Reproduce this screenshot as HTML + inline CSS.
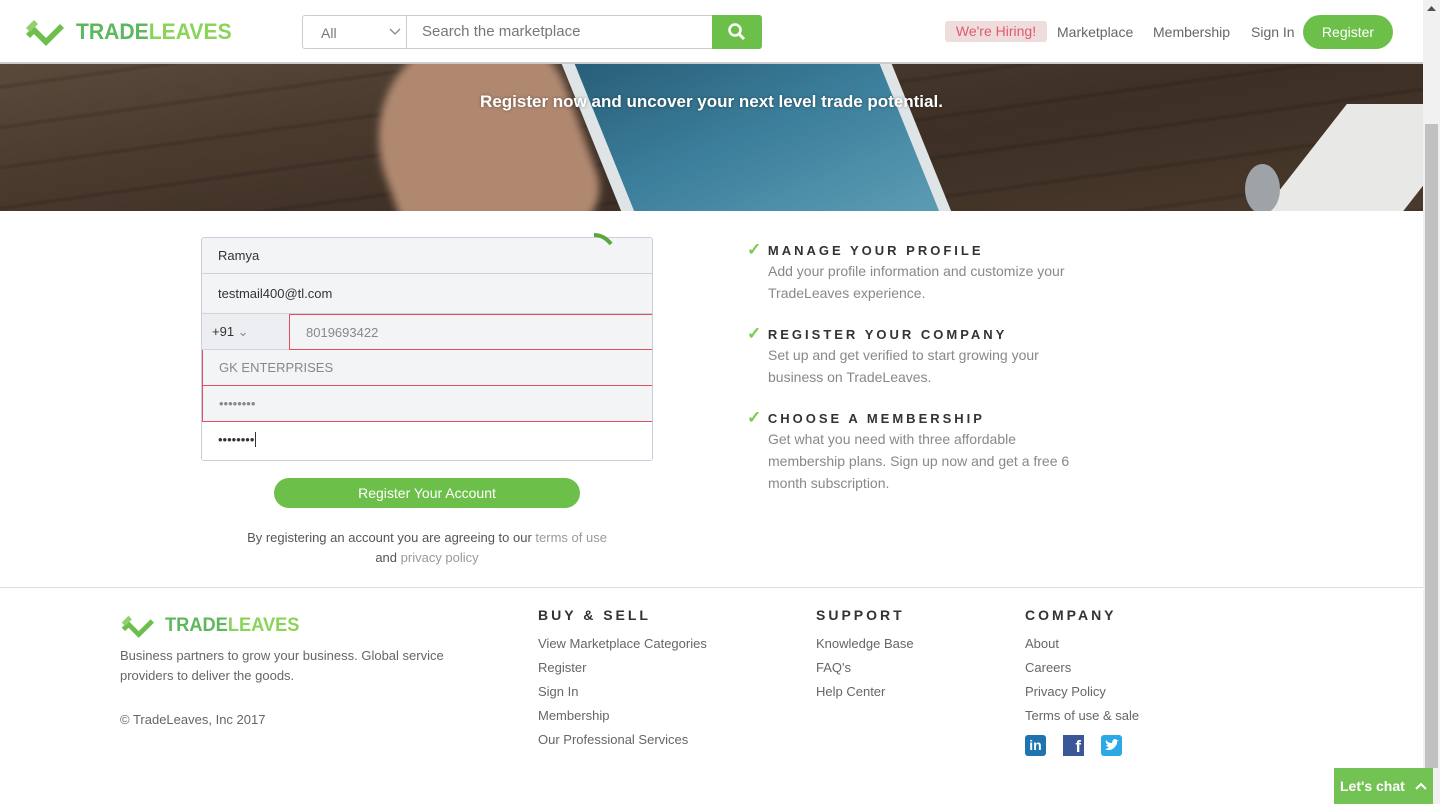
<!DOCTYPE html>
<html><head><meta charset="utf-8"><style>
*{box-sizing:border-box;margin:0;padding:0}
body{width:1440px;height:804px;overflow:hidden;font-family:"Liberation Sans",sans-serif;background:#fff;position:relative;color:#555}
.abs{position:absolute}
.hero{left:0;top:64px;width:1423px;height:147px;overflow:hidden;background:linear-gradient(170deg,#5a4a3c 0%,#4a3a2e 30%,#3d2f25 60%,#4a3a2c 100%)}
.header{left:0;top:0;width:1423px;height:64px;background:#fff;border-bottom:2px solid #ccc;z-index:5}
.logo{font-weight:bold;font-size:22px;letter-spacing:0px;transform:scaleX(0.96);transform-origin:left}
.nav{font-size:14px;color:#666}
.inp{position:absolute;left:0;width:451px;height:36px;background:#f3f4f6;border-bottom:1px solid #d0d3d8;font-size:13px;padding-left:16px;line-height:36px;color:#333}
.feat h{display:block;font-size:13px;font-weight:bold;letter-spacing:3px;color:#333}
.feat p{font-size:14px;line-height:22px;color:#888;margin-left:21px;width:328px}
.fh{font-size:14px;font-weight:bold;letter-spacing:3px;color:#333}
.fl{font-size:13px;color:#666;line-height:24px}
</style></head><body>
<div class="abs header">
  <svg class="abs" style="left:24px;top:18px" width="40" height="28" viewBox="0 0 40 28"><path d="M2 16 L10 8 L22 20 L36 6 L40 10 L22 28 L10 16 L6 20 Z" fill="#6dbf4b"/><path d="M10 2 L14 6 L6 14 L2 10Z" fill="#8fd16a"/></svg>
  <div class="abs logo" style="left:76px;top:19px"><span style="color:#5cb85c">TRADE</span><span style="color:#8bd45a">LEAVES</span></div>
  <div class="abs" style="left:302px;top:15px;width:460px;height:34px;border:1px solid #ccc;border-radius:3px;background:#fff">
    <div class="abs" style="left:18px;top:9px;font-size:14px;color:#777">All</div>
    <svg class="abs" style="left:86px;top:12px" width="12" height="8"><path d="M1 1L6 6L11 1" stroke="#888" fill="none" stroke-width="1.3"/></svg>
    <div class="abs" style="left:103px;top:0;height:32px;border-left:1px solid #ccc"></div>
    <div class="abs" style="left:119px;top:7px;font-size:15px;color:#777">Search the marketplace</div>
    <div class="abs" style="left:409px;top:-1px;width:50px;height:34px;background:#6cc04a;border-radius:0 3px 3px 0">
      <svg class="abs" style="left:15px;top:7px" width="20" height="20"><circle cx="8" cy="8" r="5.5" stroke="#fff" stroke-width="2.5" fill="none"/><path d="M12 12L17 17" stroke="#fff" stroke-width="3"/></svg>
    </div>
  </div>
  <div class="abs" style="left:945px;top:21px;width:102px;height:21px;background:#efdcdd;border-radius:3px;color:#e05a6a;font-size:14px;text-align:center;line-height:21px">We're Hiring!</div>
  <div class="abs nav" style="left:1057px;top:24px">Marketplace</div>
  <div class="abs nav" style="left:1153px;top:24px">Membership</div>
  <div class="abs nav" style="left:1251px;top:24px">Sign In</div>
  <div class="abs" style="left:1303px;top:15px;width:90px;height:34px;background:#6cc04a;border-radius:17px;color:#fff;font-size:14px;text-align:center;line-height:34px">Register</div>
</div>
<div class="abs hero">
  <div class="abs" style="left:0;top:0;width:1423px;height:147px;background:repeating-linear-gradient(172deg,rgba(0,0,0,0) 0 20px,rgba(0,0,0,.12) 22px 24px,rgba(0,0,0,0) 26px 40px)"></div>
  <div class="abs" style="left:380px;top:-30px;width:200px;height:220px;background:#b08870;border-radius:50% 40% 20% 30%;transform:rotate(-20deg);filter:blur(4px)"></div>
  <div class="abs" style="left:590px;top:-60px;width:330px;height:260px;background:#dfe4e6;transform:skewX(22deg)"></div>
  <div class="abs" style="left:603px;top:-60px;width:305px;height:260px;background:linear-gradient(160deg,#1f4e66,#3c7f9c 50%,#6aa8bc);transform:skewX(22deg)"></div>
  <div class="abs" style="left:1300px;top:40px;width:140px;height:120px;background:#e8e8e6;transform:skewX(-38deg)"></div>
  <div class="abs" style="left:1245px;top:100px;width:35px;height:50px;background:#9ea3a8;border-radius:50%"></div>
  <div class="abs" style="left:0;top:28px;width:1423px;text-align:center;color:#fff;font-weight:bold;font-size:17px;text-shadow:0 0 3px rgba(0,0,0,.4)">Register now and uncover your next level trade potential.</div>
</div>
<div class="abs" style="left:201px;top:237px;width:452px;height:224px;border:1px solid #ccd;border-radius:3px;overflow:hidden">
  <div class="inp" style="top:0">Ramya</div>
  <div class="inp" style="top:36px;height:40px;line-height:40px">testmail400@tl.com</div>
  <div class="inp" style="top:76px;width:87px;background:#eceef1;padding-left:10px">+91 <span style="color:#888">&#8964;</span></div>
  <div class="inp" style="top:76px;left:87px;width:364px;border:1px solid #e0505e;color:#888">8019693422</div>
  <div class="inp" style="top:112px;border:1px solid #e0505e;border-top:0;color:#888">GK ENTERPRISES</div>
  <div class="inp" style="top:148px;border:1px solid #e0505e;border-top:0;color:#888">••••••••</div>
  <div class="inp" style="top:184px;background:#fff;height:40px;border:0">••••••••<span style="border-left:1px solid #333;margin-left:1px"></span></div>
</div>
<svg class="abs" style="left:592px;top:232px" width="22" height="14"><path d="M2 3 Q12 3 19 12" stroke="#5aa83c" stroke-width="4" fill="none"/></svg>
<div class="abs" style="left:274px;top:478px;width:306px;height:30px;background:#6cc04a;border-radius:15px;color:#fff;font-size:14px;text-align:center;line-height:30px">Register Your Account</div>
<div class="abs" style="left:242px;top:528px;width:370px;text-align:center;font-size:13px;line-height:20px;color:#555">By registering an account you are agreeing to our <span style="color:#999">terms of use</span> and <span style="color:#999">privacy policy</span></div>
<div class="abs feat" style="left:747px;top:240px">
  <h><span style="color:#7acb4c;letter-spacing:0;font-size:17px">✓</span> MANAGE YOUR PROFILE</h>
  <p>Add your profile information and customize your TradeLeaves experience.</p>
</div>
<div class="abs feat" style="left:747px;top:324px">
  <h><span style="color:#7acb4c;letter-spacing:0;font-size:17px">✓</span> REGISTER YOUR COMPANY</h>
  <p>Set up and get verified to start growing your business on TradeLeaves.</p>
</div>
<div class="abs feat" style="left:747px;top:408px">
  <h><span style="color:#7acb4c;letter-spacing:0;font-size:17px">✓</span> CHOOSE A MEMBERSHIP</h>
  <p>Get what you need with three affordable membership plans. Sign up now and get a free 6 month subscription.</p>
</div>
<div class="abs" style="left:0;top:587px;width:1423px;border-top:1px solid #ddd"></div>
<svg class="abs" style="left:120px;top:614px" width="34" height="24" viewBox="0 0 40 28"><path d="M2 16 L10 8 L22 20 L36 6 L40 10 L22 28 L10 16 L6 20 Z" fill="#6dbf4b"/><path d="M10 2 L14 6 L6 14 L2 10Z" fill="#8fd16a"/></svg>
<div class="abs logo" style="left:165px;top:615px;font-size:19px"><span style="color:#5cb85c">TRADE</span><span style="color:#8bd45a">LEAVES</span></div>
<div class="abs fl" style="left:120px;top:646px;width:370px;line-height:20px">Business partners to grow your business. Global service providers to deliver the goods.</div>
<div class="abs fl" style="left:120px;top:710px;line-height:20px">© TradeLeaves, Inc 2017</div>
<div class="abs fh" style="left:538px;top:607px">BUY &amp; SELL</div>
<div class="abs fl" style="left:538px;top:632px">View Marketplace Categories<br>Register<br>Sign In<br>Membership<br>Our Professional Services</div>
<div class="abs fh" style="left:816px;top:607px">SUPPORT</div>
<div class="abs fl" style="left:816px;top:632px">Knowledge Base<br>FAQ's<br>Help Center</div>
<div class="abs fh" style="left:1025px;top:607px">COMPANY</div>
<div class="abs fl" style="left:1025px;top:632px">About<br>Careers<br>Privacy Policy<br>Terms of use &amp; sale</div>
<div class="abs" style="left:1025px;top:735px;width:21px;height:21px;background:#1f74b0;border-radius:3px;color:#fff;font-weight:bold;font-size:14px;text-align:center;line-height:21px">in</div>
<div class="abs" style="left:1063px;top:735px;width:21px;height:21px;background:#3b5797;color:#fff;font-weight:bold;font-size:17px;text-align:right;padding-right:3px;line-height:24px">f</div>
<div class="abs" style="left:1101px;top:735px;width:21px;height:21px;background:#2aa9e6;border-radius:3px"><svg width="21" height="21"><path d="M4 14 Q9 17 14 12 Q17 8 16 6 L18 5 L16 5 Q14 3 12 5 Q11 7 11 8 Q7 8 5 5 Q4 8 7 10 L5 10 Q6 12 8 12 Q6 14 4 14Z" fill="#fff"/></svg></div>
<div class="abs" style="left:1423px;top:0;width:17px;height:804px;background:#f1f1f1"></div>
<div class="abs" style="left:1425px;top:124px;width:13px;height:644px;background:#c1c1c1"></div>
<svg class="abs" style="left:1427px;top:6px" width="9" height="6"><path d="M0 5L4.5 0L9 5Z" fill="#505050"/></svg>
<div class="abs" style="left:1334px;top:768px;width:99px;height:36px;background:#72c254;color:#fff;font-weight:bold;font-size:14px;line-height:36px;padding-left:6px;white-space:nowrap">Let's chat
  <svg class="abs" style="left:81px;top:14px" width="12" height="8"><path d="M1 7L6 2L11 7" stroke="#fff" stroke-width="2" fill="none"/></svg></div>
</body></html>
